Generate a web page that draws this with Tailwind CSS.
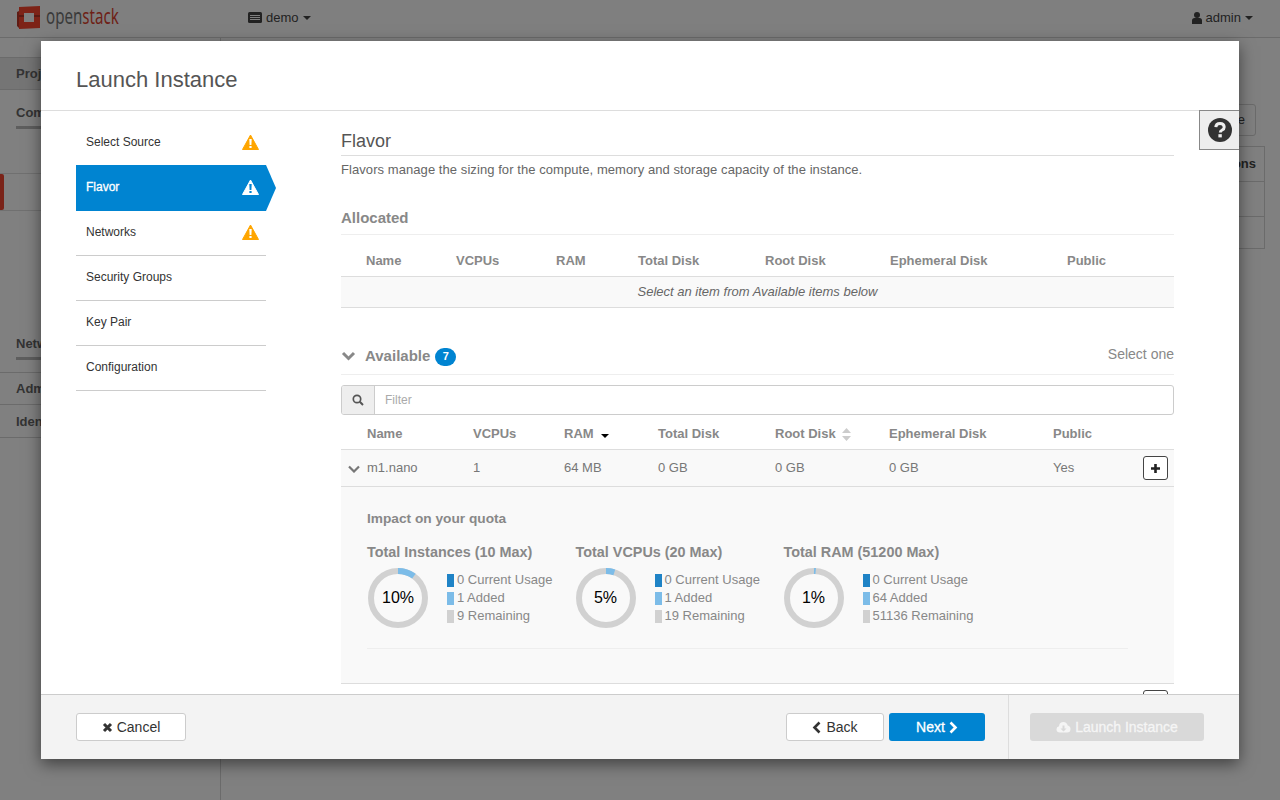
<!DOCTYPE html>
<html lang="en">
  <head>
    <meta charset="UTF-8" />
    <title>Launch Instance</title>
    <script src="https://cdn.jsdelivr.net/npm/@tailwindcss/browser@4"></script>
  </head>
  <body class="font-['Liberation_Sans',Arial,sans-serif] text-[13px] bg-[#808080] overflow-hidden">
    <div class="relative w-[1280px] h-[800px] overflow-hidden bg-[#808080] text-[#222]">
      <!-- page behind the dialog -->
      <header class="h-[38px] flex items-center border-b border-[#6b6b6b] bg-[#7f7f7f] pb-[2px]">
        <div class="w-[248px] pl-[16px] flex items-center gap-[5px] shrink-0">
          <svg width="25" height="24" viewBox="0 0 25 24">
            <path d="M3 1l21-1v22l-21 1z M8 7v9h10V7z" fill="#7d2317" fill-rule="evenodd" />
            <path d="M3 9h5v2H3zM18 9h6v2h-6z" fill="#5a1a12" />
            <path d="M3 5L1 6v14l2 2z" fill="#5f1c14" />
          </svg>
          <span class="font-['Noto_Sans',sans-serif] text-[21px] leading-none text-[#3a3a3a] origin-left scale-x-[0.72] -mt-[3px]">open<span class="text-[#6e1f17]">stack</span></span>
        </div>
        <div class="flex items-center gap-[4px]">
          <svg width="14" height="12" viewBox="0 0 14 12"><rect width="14" height="11" rx="1.5" fill="#222" /><path d="M2 3.500h10M2 5.500h10M2 7.500h10" stroke="#7f7f7f" /></svg>
          <span>demo</span>
          <span class="border-x-[4px] border-t-[4px] border-x-transparent border-t-[#222]"></span>
        </div>
        <div class="ml-auto pr-[27px] flex items-center gap-[4px]">
          <svg width="10" height="12" viewBox="0 0 10 12"><circle cx="5" cy="3" r="3" fill="#222" /><path d="M0 12V8.500Q0 6 2.500 6h5Q10 6 10 8.500V12z" fill="#222" /></svg>
          <span>admin</span>
          <span class="border-x-[4px] border-t-[4px] border-x-transparent border-t-[#222]"></span>
        </div>
      </header>
      <div class="flex h-[762px]">
        <aside class="w-[221px] border-r border-[#6b6b6b] font-bold text-[#333] pt-[19px]">
          <div class="h-[33px] pl-[16px] flex items-center border-y border-[#6b6b6b] bg-[#757575]">Project</div>
          <div class="mt-[13px] pl-[16px] h-[25px]"><span class="inline-block pb-[3px] border-b-[3px] border-[#5e5e5e]">Compute</span></div>
          <div class="mt-[45px] h-[38px] border-y border-[#707070] flex">
            <div class="w-[4px] bg-[#7a2318] rounded-r-[2px]"></div>
          </div>
          <div class="mt-[123px] pl-[16px] h-[25px]"><span class="inline-block pb-[3px] border-b-[3px] border-[#5e5e5e]">Network</span></div>
          <div class="mt-[13px] h-[33px] pl-[16px] flex items-center border-y border-[#6b6b6b]">Admin</div>
          <div class="h-[33px] pl-[16px] pt-[1px] flex items-center border-b border-[#6b6b6b]">Identity</div>
        </aside>
        <main class="flex-1 flex flex-col items-end pt-[66px] pr-[15px]">
          <div class="mr-[9px] h-[32px] w-[60px] border border-[#6b6b6b] rounded-[3px] flex items-center justify-end pr-[10px]">Create</div>
          <div class="mt-[10px] w-[100px] border border-[#6b6b6b]">
            <div class="h-[35px] flex items-center justify-end pr-[8px] font-bold border-b border-[#6b6b6b]">Actions</div>
            <div class="h-[35px] border-b border-[#6b6b6b]"></div>
            <div class="h-[31px]"></div>
          </div>
        </main>
      </div>

      <!-- dialog -->
      <div class="absolute left-[41px] top-[41px] w-[1198px] h-[718px] bg-white flex flex-col shadow-[0_5px_15px_rgba(0,0,0,0.5)]">
        <div class="h-[70px] shrink-0 border-b border-[#ddd] pl-[35px] pt-[9px] flex items-center">
          <h1 class="text-[22px] leading-none text-[#555]">Launch Instance</h1>
        </div>

        <!-- help toggle -->
        <div class="absolute right-0 top-[69px] w-[40px] h-[40px] bg-[#eee] border-y border-l border-[#888] flex items-center justify-center">
          <svg width="24" height="24" viewBox="0 0 24 24">
            <circle cx="12" cy="12" r="12" fill="#333" />
            <path d="M7.800 9.200Q8 5.500 12 5.500T16.200 9Q16.200 11 14.200 12T12.300 14.500" fill="none" stroke="#eee" stroke-width="3" />
            <rect x="10.400" y="16.200" width="3.400" height="3.200" fill="#eee" />
          </svg>
        </div>

        <div class="flex-1 flex min-h-0 overflow-hidden">
          <!-- wizard steps -->
          <nav class="w-[300px] pl-[35px] pt-[9px] shrink-0 text-[12px] text-[#333]">
            <div class="w-[190px] h-[45px] flex items-center justify-between pl-[10px] pr-[7px] pb-[2px]">
              <span>Select Source</span>
              <svg width="17" height="16" viewBox="0 0 17 16"><path d="M8.500 1L16.500 15.500H.5z" fill="#fea500" stroke="#fea500" stroke-linejoin="round" /><path d="M7.300 5h2.400l-.3 6H7.600zM7.400 12h2.200v2H7.400z" fill="#fff" /></svg>
            </div>
            <div class="relative w-[190px] h-[46px] bg-[#0084d1] text-white flex items-center justify-between pl-[10px] pr-[7px] pb-[2px]">
              <span class="[-webkit-text-stroke:0.3px_white]">Flavor</span>
              <svg width="17" height="16" viewBox="0 0 17 16"><path d="M8.500 1L16.500 15.500H.5z" fill="#fff" stroke="#fff" stroke-linejoin="round" /><path d="M7.300 5h2.400l-.3 6H7.600zM7.400 12h2.200v2H7.400z" fill="#0084d1" /></svg>
              <svg class="absolute left-[190px] top-0" width="10" height="46" viewBox="0 0 10 46"><path d="M0 0L10 23L0 46z" fill="#0084d1" /></svg>
            </div>
            <div class="w-[190px] h-[45px] flex items-center justify-between pl-[10px] pr-[7px] pb-[3px] border-b border-[#ccc]">
              <span>Networks</span>
              <svg width="17" height="16" viewBox="0 0 17 16"><path d="M8.500 1L16.500 15.500H.5z" fill="#fea500" stroke="#fea500" stroke-linejoin="round" /><path d="M7.300 5h2.400l-.3 6H7.600zM7.400 12h2.200v2H7.400z" fill="#fff" /></svg>
            </div>
            <div class="w-[190px] h-[45px] flex items-center pl-[10px] pb-[2px] border-b border-[#ccc]">Security Groups</div>
            <div class="w-[190px] h-[45px] flex items-center pl-[10px] pb-[2px] border-b border-[#ccc]">Key Pair</div>
            <div class="w-[190px] h-[45px] flex items-center pl-[10px] pb-[2px] border-b border-[#ccc]">Configuration</div>
          </nav>

          <!-- step content -->
          <section class="w-[833px] pt-[19px] shrink-0 text-[#777]">
            <h2 class="text-[18px] leading-[22px] text-[#555] pb-[3px] border-b border-[#ddd]">Flavor</h2>
            <p class="mt-[6px] leading-[16px] text-[#666] tracking-[0.07px]">Flavors manage the sizing for the compute, memory and storage capacity of the instance.</p>

            <h3 class="mt-[30px] text-[15px] leading-[20px] font-bold text-[#888] pb-[6px] border-b border-[#eee]">Allocated</h3>
            <div class="grid grid-cols-[90px_100px_82px_127px_125px_177px_1fr] pl-[25px] pt-[10px] h-[42px] items-center font-bold text-[#888] border-b border-[#ddd]">
              <span>Name</span><span>VCPUs</span><span>RAM</span><span>Total Disk</span><span>Root Disk</span><span>Ephemeral Disk</span><span>Public</span>
            </div>
            <div class="h-[31px] bg-[#f9f9f9] border-b border-[#ddd] flex items-center justify-center italic text-[#666]">Select an item from Available items below</div>

            <div class="mt-[37px] h-[30px] flex items-start justify-between border-b border-[#eee]">
              <div class="flex items-center gap-[9px]">
                <svg width="15" height="10" viewBox="0 0 15 10"><path d="M2 2L7.500 7.500L13 2" fill="none" stroke="#888" stroke-width="3" /></svg>
                <span class="text-[15px] leading-[22px] font-bold text-[#888]">Available</span>
                <span class="w-[21px] h-[18px] -ml-[4px] mt-[1px] rounded-full bg-[#0084d1] text-white text-[11px] font-bold flex items-center justify-center">7</span>
              </div>
              <span class="text-[14px] leading-[20px] text-[#888] -mt-[1px]">Select one</span>
            </div>

            <div class="mt-[10px] h-[30px] flex border border-[#ccc] rounded-[3px] overflow-hidden">
              <div class="w-[33px] bg-[#eee] border-r border-[#ccc] flex items-center justify-center">
                <svg width="12" height="12" viewBox="0 0 12 12"><circle cx="5" cy="5" r="3.700" fill="none" stroke="#555" stroke-width="1.700" /><path d="M7.800 7.800L11 11" stroke="#555" stroke-width="2" /></svg>
              </div>
              <div class="flex-1 pl-[10px] flex items-center text-[12px] text-[#aaa]">Filter</div>
            </div>

            <div class="grid grid-cols-[106px_91px_94px_117px_114px_164px_1fr] pl-[26px] pt-[4px] h-[35px] items-center font-bold text-[#888] border-b border-[#ddd]">
              <span>Name</span><span>VCPUs</span>
              <span class="flex items-center gap-[7px]">RAM<span class="border-x-[4px] border-t-[4px] border-x-transparent border-t-black mt-[3px]"></span></span>
              <span>Total Disk</span>
              <span class="flex items-center gap-[6px]">Root Disk<svg width="9" height="13" viewBox="0 0 9 13"><path d="M4.500 0L9 5H0zM4.500 13L0 8h9z" fill="#ccc" /></svg></span>
              <span>Ephemeral Disk</span><span>Public</span>
            </div>
            <div class="relative grid grid-cols-[106px_91px_94px_117px_114px_164px_1fr] pl-[26px] h-[37px] items-center bg-[#f9f9f9] border-b border-[#ddd]">
              <svg class="absolute left-[7px] top-[15px]" width="12" height="8" viewBox="0 0 12 8"><path d="M1 1.500L6 6.500L11 1.500" fill="none" stroke="#777" stroke-width="2.200" /></svg>
              <span>m1.nano</span><span>1</span><span>64 MB</span><span>0 GB</span><span>0 GB</span><span>0 GB</span><span>Yes</span>
              <span class="absolute right-[6px] top-[6px] w-[25px] h-[24px] bg-white border border-[#444] rounded-[3px] flex items-center justify-center">
                <svg width="11" height="11" viewBox="0 0 11 11"><path d="M5.500 1v9M1 5.500h9" stroke="#222" stroke-width="2.600" /></svg>
              </span>
            </div>

            <div class="h-[197px] bg-[#f9f9f9] border-b border-[#ddd] pl-[26px] pr-[46px] pt-[23px]">
              <div class="text-[13.700px] leading-[18px] font-bold text-[#888]">Impact on your quota</div>
              <div class="mt-[15px] flex pb-[20px] border-b border-[#eee]">
                <div class="w-[208.500px]">
                  <div class="text-[14.400px] leading-[18px] font-bold text-[#888]">Total Instances (10 Max)</div>
                  <div class="mt-[7px] flex">
                    <div class="relative ml-[1px] w-[60px] h-[60px] flex items-center justify-center text-[16px] text-black">
                      <svg class="absolute inset-0" width="60" height="60" viewBox="0 0 60 60"><circle cx="30" cy="30" r="27" fill="none" stroke="#d1d1d1" stroke-width="6" /><path d="M30 3A27 27 0 0 1 45.900 8.200" fill="none" stroke="#7cbce8" stroke-width="6" /></svg>
                      <span>10%</span>
                    </div>
                    <div class="ml-[19px] mt-[3px] text-[#888] leading-[18px]">
                      <div class="flex items-center"><span class="w-[7px] h-[13px] bg-[#1f83c6] mr-[3px]"></span>0 Current Usage</div>
                      <div class="flex items-center"><span class="w-[7px] h-[13px] bg-[#7cbce8] mr-[3px]"></span>1 Added</div>
                      <div class="flex items-center"><span class="w-[7px] h-[13px] bg-[#d1d1d1] mr-[3px]"></span>9 Remaining</div>
                    </div>
                  </div>
                </div>
                <div class="w-[208px]">
                  <div class="text-[14.400px] leading-[18px] font-bold text-[#888]">Total VCPUs (20 Max)</div>
                  <div class="mt-[7px] flex">
                    <div class="relative w-[60px] h-[60px] flex items-center justify-center text-[16px] text-black">
                      <svg class="absolute inset-0" width="60" height="60" viewBox="0 0 60 60"><circle cx="30" cy="30" r="27" fill="none" stroke="#d1d1d1" stroke-width="6" /><path d="M30 3A27 27 0 0 1 38.300 4.300" fill="none" stroke="#7cbce8" stroke-width="6" /></svg>
                      <span>5%</span>
                    </div>
                    <div class="ml-[19px] mt-[3px] text-[#888] leading-[18px]">
                      <div class="flex items-center"><span class="w-[7px] h-[13px] bg-[#1f83c6] mr-[3px]"></span>0 Current Usage</div>
                      <div class="flex items-center"><span class="w-[7px] h-[13px] bg-[#7cbce8] mr-[3px]"></span>1 Added</div>
                      <div class="flex items-center"><span class="w-[7px] h-[13px] bg-[#d1d1d1] mr-[3px]"></span>19 Remaining</div>
                    </div>
                  </div>
                </div>
                <div>
                  <div class="text-[14.400px] leading-[18px] font-bold text-[#888]">Total RAM (51200 Max)</div>
                  <div class="mt-[7px] flex">
                    <div class="relative w-[60px] h-[60px] flex items-center justify-center text-[16px] text-black">
                      <svg class="absolute inset-0" width="60" height="60" viewBox="0 0 60 60"><circle cx="30" cy="30" r="27" fill="none" stroke="#d1d1d1" stroke-width="6" /><path d="M30 3A27 27 0 0 1 31.700 3.100" fill="none" stroke="#7cbce8" stroke-width="6" /></svg>
                      <span>1%</span>
                    </div>
                    <div class="ml-[19px] mt-[3px] text-[#888] leading-[18px]">
                      <div class="flex items-center"><span class="w-[7px] h-[13px] bg-[#1f83c6] mr-[3px]"></span>0 Current Usage</div>
                      <div class="flex items-center"><span class="w-[7px] h-[13px] bg-[#7cbce8] mr-[3px]"></span>64 Added</div>
                      <div class="flex items-center"><span class="w-[7px] h-[13px] bg-[#d1d1d1] mr-[3px]"></span>51136 Remaining</div>
                    </div>
                  </div>
                </div>
              </div>
            </div>
            <div class="relative h-[20px]">
              <span class="absolute right-[6px] top-[6px] w-[25px] h-[24px] bg-white border border-[#444] rounded-[3px]"></span>
            </div>
          </section>
        </div>

        <!-- footer -->
        <footer class="h-[65px] shrink-0 bg-[#f3f3f3] border-t border-[#ccc] flex text-[14px]">
          <div class="flex-1 pl-[35px] pr-[23px] flex items-center justify-between">
            <button class="w-[110px] h-[28px] bg-white border border-[#ccc] rounded-[3px] flex items-center justify-center gap-[4px] text-[#333]">
              <svg width="11" height="11" viewBox="0 0 11 11"><path d="M2 2L9 9M9 2L2 9" stroke="#333" stroke-width="3" /></svg>Cancel
            </button>
            <div class="flex gap-[5px]">
              <button class="w-[98px] h-[28px] bg-white border border-[#ccc] rounded-[3px] flex items-center justify-center gap-[5px] text-[#333]">
                <svg width="9" height="13" viewBox="0 0 9 13"><path d="M7.500 1.500L2.500 6.500L7.500 11.500" fill="none" stroke="#333" stroke-width="2.600" /></svg>Back
              </button>
              <button class="w-[96px] h-[28px] bg-[#0084d1] rounded-[3px] flex items-center justify-center gap-[4px] text-white">
                <span class="[-webkit-text-stroke:0.3px_white]">Next</span><svg width="9" height="13" viewBox="0 0 9 13"><path d="M1.500 1.500L6.500 6.500L1.500 11.500" fill="none" stroke="#fff" stroke-width="2.600" /></svg>
              </button>
            </div>
          </div>
          <div class="w-[231px] border-l border-[#ddd] pl-[21px] flex items-center">
            <button class="w-[174px] h-[28px] bg-[#d9d9d9] rounded-[3px] flex items-center justify-center gap-[4px] text-[#f5f5f5]">
              <svg width="15" height="12" viewBox="0 0 15 12"><path d="M4 11.500Q.5 11.500 .5 8.300Q.5 5.700 3 5.200Q3.500 1 7.500 1Q10.800 1 11.700 4.500Q14.500 5 14.500 8Q14.500 11.500 11 11.500z" fill="#f5f5f5" /><path d="M6.500 4.500h2v3h2L7.500 10.500L4.500 7.500h2z" fill="#d9d9d9" /></svg><span class="[-webkit-text-stroke:0.3px_#f5f5f5]">Launch Instance</span>
            </button>
          </div>
        </footer>
      </div>
    </div>
  </body>
</html>
